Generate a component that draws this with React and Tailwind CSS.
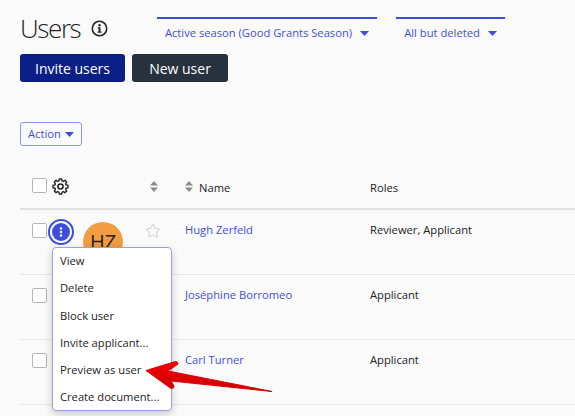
import { Star, EllipsisVertical } from "lucide-react";

function Caret({ className }) {
  return (
    <svg width="9" height="5" viewBox="0 0 9 5" className={className}>
      <path d="M0 0h9L4.5 5z" fill="currentColor" />
    </svg>
  );
}

function Sorter() {
  return (
    <svg width="8" height="11" viewBox="0 0 8 11" className="text-[#8a8a8a]">
      <path d="M4 0l4 4.5H0zM4 11L0 6.5h8z" fill="currentColor" />
    </svg>
  );
}

function Checkbox() {
  return <div className="h-[15px] w-[15px] rounded-[2px] border border-[#b5b5b5] bg-white" />;
}

function InfoIcon() {
  return (
    <svg width="17" height="17" viewBox="0 0 17 17" className="ml-[11px] mt-[1px] text-[#222]">
      <circle cx="8.5" cy="8.5" r="7.2" fill="none" stroke="currentColor" strokeWidth="1.6" />
      <circle cx="8.5" cy="5.2" r="1.2" fill="currentColor" />
      <path d="M6.8 7.3h2.7v4.2h1v1.2H6.6v-1.2h1v-3H6.8z" fill="currentColor" />
    </svg>
  );
}

function GearIcon() {
  return (
    <svg width="17" height="17" viewBox="0 0 24 24" className="ml-[5px]" fill="none" stroke="#222" strokeWidth="2.2" strokeLinejoin="round">
      <path d="M10 1.5h4l.6 3.1 1.8.8 2.7-1.8 2.8 2.8-1.8 2.7.8 1.8 3.1.6v4l-3.1.6-.8 1.8 1.8 2.7-2.8 2.8-2.7-1.8-1.8.8-.6 3.1h-4l-.6-3.1-1.8-.8-2.7 1.8-2.8-2.8 1.8-2.7-.8-1.8-3.1-.6v-4l3.1-.6.8-1.8-1.8-2.7 2.8-2.8 2.7 1.8 1.8-.8z" transform="translate(12 12) scale(.88) translate(-12 -13.5)" />
      <circle cx="12" cy="12" r="3.6" />
    </svg>
  );
}

function Row({ name, roles, first }) {
  return (
    <div className="grid h-[65px] grid-cols-[165px_185px_1fr] border-b border-[#e8e8e8] pt-[13px] text-[11.2px] text-[#222]">
      <div className="flex items-start pl-3">
        <Checkbox />
        {first && (
          <>
            <div className="ml-[1px] -mt-1 flex h-[26px] w-[26px] items-center justify-center rounded-full border-2 border-[#3d4ede] bg-[#fafafa]">
              <div className="flex h-[18px] w-[18px] items-center justify-center rounded-full bg-[#3d4ede]">
                <EllipsisVertical size={12} strokeWidth={3} className="text-white" />
              </div>
            </div>
            <div className="ml-[9px] -mt-[1px] flex h-10 w-10 shrink-0 items-center justify-center rounded-full bg-[#f39c41] text-[20px] text-[#222]">
              HZ
            </div>
            <Star size={16} strokeWidth={1.2} className="ml-[22px] text-[#c4c4c4]" />
          </>
        )}
      </div>
      <a className="mt-[-1px] text-[#3d4ede]">{name}</a>
      <div className="mt-[-1px]">{roles}</div>
    </div>
  );
}

export default function App() {
  return (
    <div className="relative h-[416px] w-[575px] overflow-hidden bg-[#fafafa] pl-5 font-['Open_Sans',sans-serif]">
      {/* Header */}
      <div className="flex h-[54px]">
        <div className="flex h-[42px] w-[137px] items-center pt-[14px]">
          <h1 className="text-[26px] font-light leading-none tracking-[-1.4px] text-[#222]">Users</h1>
          <InfoIcon />
        </div>
        <div className="mt-[17px] flex h-[37px] w-[220px] items-start justify-center gap-[8px] border-t-2 border-[#3d4ede] pt-[6px] text-[11.2px] text-[#3d4ede]">
          <span>Active season (Good Grants Season)</span>
          <Caret className="mt-[6px]" />
        </div>
        <div className="ml-[19px] mt-[17px] flex h-[37px] w-[109px] items-start justify-center gap-[8px] border-t-2 border-[#3d4ede] pt-[6px] text-[11.2px] text-[#3d4ede]">
          <span>All but deleted</span>
          <Caret className="mt-[6px]" />
        </div>
      </div>

      <div className="flex gap-[7px]">
        <button className="h-[28px] w-[105px] rounded-[3px] bg-[#0b1f87] text-[14px] text-white">Invite users</button>
        <button className="h-[28px] w-[96px] rounded-[3px] bg-[#28323f] text-[14px] text-white">New user</button>
      </div>

      <button className="mt-[40px] flex h-6 w-[62px] items-center justify-center gap-[4px] rounded-[3px] border border-[#8f97f0] text-[11.2px] text-[#3d4ede]">
        Action
        <Caret />
      </button>

      {/* Table */}
      <div className="mt-[23px] grid h-[41px] grid-cols-[165px_185px_1fr] border-b-2 border-[#e2e2e2] pt-[9px] text-[11.2px] text-[#222]">
        <div className="flex items-start pl-3">
          <Checkbox />
          <GearIcon />
          <div className="ml-[81px] mt-[3px]"><Sorter /></div>
        </div>
        <div className="flex items-start gap-[6px] pt-[2px]">
          <div className="mt-[1px]"><Sorter /></div>
          <span>Name</span>
        </div>
        <div className="pt-[2px]">Roles</div>
      </div>
      <Row first name="Hugh Zerfeld" roles="Reviewer, Applicant" />
      <Row name="Joséphine Borromeo" roles="Applicant" />
      <Row name="Carl Turner" roles="Applicant" />

      {/* Action menu */}
      <div className="absolute left-[52px] top-[247px] h-[164px] w-[120px] rounded-[4px] border border-[#9aa0ee] bg-white pl-[7px] text-[11.2px] text-[#222] shadow-[0_3px_8px_rgba(0,0,0,0.2)]">
        {["View", "Delete", "Block user", "Invite applicant...", "Preview as user", "Create document..."].map((item) => (
          <div key={item} className="flex h-[27.2px] items-center">{item}</div>
        ))}
      </div>

      {/* Annotation arrow */}
      <svg width="140" height="40" viewBox="0 0 140 40" className="absolute left-[140px] top-[358px]">
        <defs>
          <linearGradient id="red" x1="0" y1="0" x2="0" y2="1">
            <stop offset="0" stopColor="#f50000" />
            <stop offset="1" stopColor="#c80000" />
          </linearGradient>
        </defs>
        <path
          d="M6 12.5 L35.5 3.5 Q38 3.5 38 6 L28 13 L132 33.5 L31 23 L34 28 Q34 31 31 30.5 Z"
          fill="url(#red)"
          stroke="#dd0000"
          strokeWidth="1"
          strokeLinejoin="round"
        />
      </svg>
    </div>
  );
}
